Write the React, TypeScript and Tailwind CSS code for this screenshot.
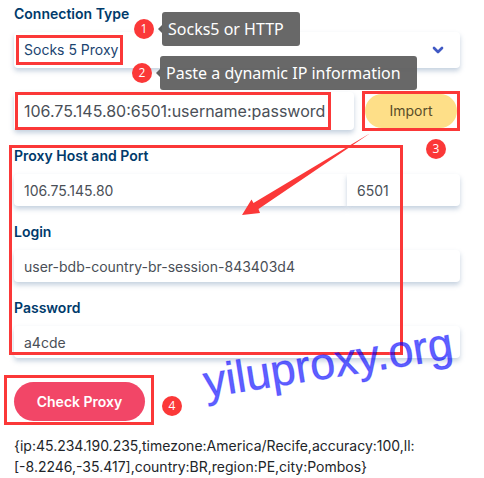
import { useState, type ReactNode } from "react";
import { ChevronDown } from "lucide-react";

const FIELD =
  "block w-full min-w-0 rounded bg-white px-2.5 shadow-[0_3px_5px_rgba(110,140,175,0.4)] outline-none";
const VALUE = "text-sm text-[#4a4f57]";
const LABEL = "block text-sm leading-5 font-semibold text-[#003a6b]";
const FRAME = "border-3 border-[#fb3838]";

function Step({ n }: { n: number }) {
  return (
    <span className="flex size-5 shrink-0 items-center justify-center rounded-full bg-[#fb3838] font-['Open_Sans',sans-serif] text-xs text-white">
      {n}
    </span>
  );
}

function Callout({ n, children }: { n: number; children: ReactNode }) {
  return (
    <div className="flex items-center gap-1">
      <Step n={n} />
      <div className="flex items-center">
        <span className="border-y-4 border-r-4 border-y-transparent border-r-[#606060]" />
        <span className="flex h-[34px] items-center rounded-[3px] bg-[#606060]/95 pr-4 pl-1.5 font-['Noto_Sans',sans-serif] text-base whitespace-nowrap text-white">
          {children}
        </span>
      </div>
    </div>
  );
}

export default function App() {
  const [type, setType] = useState("socks5");
  const [proxy, setProxy] = useState("106.75.145.80:6501:username:password");
  const [host, setHost] = useState("106.75.145.80");
  const [port, setPort] = useState("6501");
  const [login, setLogin] = useState("user-bdb-country-br-session-843403d4");
  const [password, setPassword] = useState("a4cde");

  const importProxy = () => {
    const [nextHost, nextPort, nextLogin, nextPassword] = proxy.split(":");
    setHost(nextHost || "");
    setPort(nextPort || "");
    setLogin(nextLogin || "");
    setPassword(nextPassword || "");
  };

  return (
    <main className="min-h-screen overflow-hidden bg-white pt-1 pr-6 pl-3.5 font-[Inter,sans-serif]">
      <section className="relative">
        <label htmlFor="type" className={LABEL}>Connection Type</label>
        <div className="relative mt-2">
          <select
            id="type"
            value={type}
            onChange={(e) => setType(e.target.value)}
            className={`${FIELD} h-9 appearance-none text-sm text-[#1b4470]`}
          >
            <option value="socks5">Socks 5 Proxy</option>
            <option value="http">HTTP Proxy</option>
          </select>
          <ChevronDown className="pointer-events-none absolute top-2.5 right-3.5 size-4 text-[#4059c4]" strokeWidth={4} />
          <div className={`${FRAME} pointer-events-none absolute inset-y-[3px] left-0.5 w-[107px]`} />
        </div>
        <div className="absolute top-2 left-[118px] flex flex-col gap-2.5">
          <div className="pl-0.5">
            <Callout n={1}>Socks5 or HTTP</Callout>
          </div>
          <Callout n={2}>Paste a dynamic IP information</Callout>
        </div>
      </section>

      <section className="mt-[23px] flex items-center gap-2">
        <div className="relative flex-1">
          <input
            aria-label="Proxy information"
            value={proxy}
            onChange={(e) => setProxy(e.target.value)}
            className={`${FIELD} h-[38px] text-base text-[#4a4f57]`}
          />
          <div className={`${FRAME} pointer-events-none absolute inset-y-0 left-px w-[316px]`} />
        </div>
        <div className={`${FRAME} w-[98px] shrink-0`}>
          <button
            type="button"
            onClick={importProxy}
            className="h-[34px] w-full rounded-full bg-[#fedf88] text-sm text-[#5a4d28]"
          >
            Import
          </button>
        </div>
      </section>

      <div className="relative mt-[15px]">
        <label htmlFor="host" className={LABEL}>Proxy Host and Port</label>
        <div className="mt-2 flex">
          <input
            id="host"
            value={host}
            onChange={(e) => setHost(e.target.value)}
            className={`${FIELD} ${VALUE} h-8 flex-1 rounded-r-none`}
          />
          <div className="w-[113px] shrink-0">
            <input
              aria-label="Port"
              value={port}
              onChange={(e) => setPort(e.target.value)}
              className={`${FIELD} ${VALUE} h-8 rounded-l-none`}
            />
          </div>
        </div>
        <label htmlFor="login" className={`${LABEL} mt-4 mb-2`}>Login</label>
        <input
          id="login"
          value={login}
          onChange={(e) => setLogin(e.target.value)}
          className={`${FIELD} ${VALUE} h-8`}
        />
        <label htmlFor="password" className={`${LABEL} mt-4 mb-2`}>Password</label>
        <input
          id="password"
          value={password}
          onChange={(e) => setPassword(e.target.value)}
          className={`${FIELD} ${VALUE} h-8`}
        />

        <div className={`${FRAME} pointer-events-none absolute -top-px -left-[5px] h-[210px] w-[394px]`} />
        <svg
          viewBox="0 0 130 84"
          className="pointer-events-none absolute -top-3 left-[228px] h-[84px] w-[130px] fill-[#fb3838]"
        >
          <path d="M0 81 9.5 65.5 11.5 69 128.5 -1 16.5 75 18 79Z" />
        </svg>
        <div className="absolute -top-[7px] right-3.5">
          <Step n={3} />
        </div>
        <span className="pointer-events-none absolute top-[194px] left-[188px] -rotate-9 font-['Liberation_Sans',sans-serif] text-[45px] leading-none text-[#0000ff]/65 [-webkit-text-stroke:1px_rgba(0,0,255,0.3)]">
          yiluproxy.org
        </span>
      </div>

      <div className="mt-[17px] flex items-center gap-2">
        <div className={`${FRAME} -ml-2.5 pt-1 pr-1.5 pb-px pl-[7px]`}>
          <button
            type="button"
            className="block h-[39px] w-[131px] rounded-full bg-[#f24667] text-sm font-semibold text-white"
          >
            Check Proxy
          </button>
        </div>
        <div className="pt-3">
          <Step n={4} />
        </div>
      </div>

      <p className="mt-2.5 text-sm leading-[21px] text-[#222529]">
        {"{ip:45.234.190.235,timezone:America/Recife,accuracy:100,ll:"}
        <br />
        {"[-8.2246,-35.417],country:BR,region:PE,city:Pombos}"}
      </p>
    </main>
  );
}
